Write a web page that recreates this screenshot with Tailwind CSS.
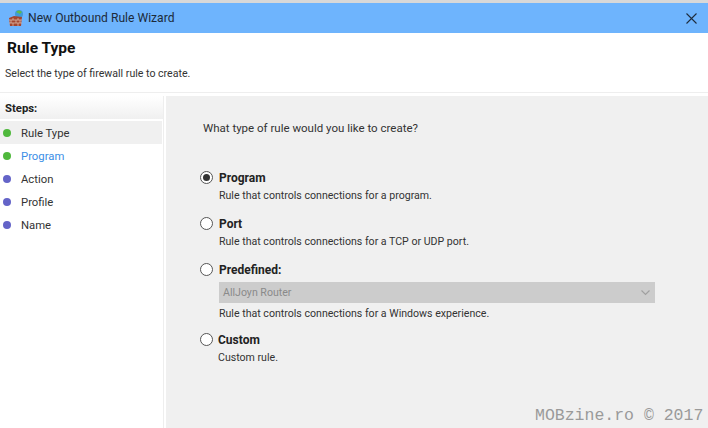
<!DOCTYPE html>
<html lang="en">
<head>
<meta charset="UTF-8">
<title>New Outbound Rule Wizard</title>
<script src="https://cdn.jsdelivr.net/npm/@tailwindcss/browser@4"></script>
</head>
<body class="relative w-[708px] h-[428px] overflow-hidden bg-white font-['Roboto',sans-serif] text-[10.6px] text-[#333]">
  <div class="h-[3px] bg-[#d8d8d8]"></div>

  <!-- title bar -->
  <div class="h-[30px] bg-[#6eb4fd] flex items-center pl-[8px] pr-[11px]">
    <svg class="w-[16px] h-[18px]" viewBox="0 0 16 18">
      <circle cx="11" cy="5" r="4" fill="#3f9bd8"/>
      <path d="M8 3q3-3 6 0l-2 2z" fill="#62b84a"/>
      <path d="M1 9l5-2 8 1-1 9H2z" fill="#a4452f"/>
      <path d="M1 11h13M1 14h13M5 9v2M10 9v2M3 11v3M8 11v3M12 11v3M5 14v3M10 14v3" stroke="#dcb7a5" stroke-width="0.8"/>
    </svg>
    <span class="ml-[4px] text-[12.1px] text-[#1c2a3a]">New Outbound Rule Wizard</span>
    <svg class="ml-auto w-[11px] h-[11px]" viewBox="0 0 11 11"><path d="M0.5 0.5l10 10M10.5 0.5l-10 10" stroke="#1f2d3d" stroke-width="1.1"/></svg>
  </div>

  <!-- header -->
  <div class="h-[60px] border-b border-[#eeeeee] pl-[7px] pt-[5px]">
    <div class="text-[15.5px] font-bold leading-[20px] text-[#111]">Rule Type</div>
    <div class="-ml-[2px] mt-[8px] leading-[16px]">Select the type of firewall rule to create.</div>
  </div>

  <div class="flex h-[335px] pt-[3px]">
    <!-- steps -->
    <div class="w-[164px] shrink-0 border-r border-[#eeeeee] text-[11.3px]">
      <div class="h-[23px] flex items-center pl-[5px] pt-[3px] font-bold text-[#222] bg-gradient-to-b from-white to-[#f0f0f0]">Steps:</div>
      <div class="mt-[2px] flex flex-col">
        <div class="h-[23px] w-[162px] bg-[#f0f0f0] flex items-center pl-[3px]"><span class="w-[8px] h-[8px] rounded-full bg-[#4fb83c]"></span><span class="ml-[10px] pt-[3px]">Rule Type</span></div>
        <div class="h-[23px] flex items-center pl-[3px]"><span class="w-[8px] h-[8px] rounded-full bg-[#4fb83c]"></span><span class="ml-[10px] pt-[3px] text-[#3a8ee6]">Program</span></div>
        <div class="h-[23px] flex items-center pl-[3px]"><span class="w-[8px] h-[8px] rounded-full bg-[#6464c8]"></span><span class="ml-[10px] pt-[3px]">Action</span></div>
        <div class="h-[23px] flex items-center pl-[3px]"><span class="w-[8px] h-[8px] rounded-full bg-[#6464c8]"></span><span class="ml-[10px] pt-[3px]">Profile</span></div>
        <div class="h-[23px] flex items-center pl-[3px]"><span class="w-[8px] h-[8px] rounded-full bg-[#6464c8]"></span><span class="ml-[10px] pt-[3px]">Name</span></div>
      </div>
    </div>

    <!-- content -->
    <div class="ml-[2px] flex-1 bg-[#f0f0f0] pl-[37px]">
      <div class="pt-[23px] leading-[18px] text-[11.5px]">What type of rule would you like to create?</div>

      <div class="mt-[31px] -ml-[3px] flex flex-col">
        <div class="h-[46px]">
          <div class="flex items-center h-[18px]">
            <span class="w-[13px] h-[13px] rounded-full border border-[#555] bg-white flex items-center justify-center"><span class="w-[7px] h-[7px] rounded-full bg-[#333]"></span></span>
            <span class="ml-[6px] pt-[2px] font-bold text-[12px] text-[#222]">Program</span>
          </div>
          <div class="ml-[19px] leading-[20px]">Rule that controls connections for a program.</div>
        </div>
        <div class="h-[46px]">
          <div class="flex items-center h-[18px]">
            <span class="w-[13px] h-[13px] rounded-full border border-[#555] bg-white"></span>
            <span class="ml-[6px] pt-[2px] font-bold text-[12px] text-[#222]">Port</span>
          </div>
          <div class="ml-[19px] leading-[20px]">Rule that controls connections for a TCP or UDP port.</div>
        </div>
        <div class="h-[70px]">
          <div class="flex items-center h-[18px]">
            <span class="w-[13px] h-[13px] rounded-full border border-[#555] bg-white"></span>
            <span class="ml-[6px] pt-[2px] font-bold text-[12px] text-[#222]">Predefined:</span>
          </div>
          <div class="ml-[19px] w-[436px] h-[21px] mt-[4px] bg-[#cccccc] flex items-center justify-between pl-[4px] pr-[5px] text-[#8a8a8a]">
            <span>AllJoyn Router</span>
            <svg class="w-[9px] h-[6px]" viewBox="0 0 9 6"><path d="M0.5 0.5l4 4 4-4" fill="none" stroke="#a0a0a0" stroke-width="1.1"/></svg>
          </div>
          <div class="ml-[19px] leading-[20px] mt-[1px]">Rule that controls connections for a Windows experience.</div>
        </div>
        <div>
          <div class="flex items-center h-[18px]">
            <span class="w-[13px] h-[13px] rounded-full border border-[#555] bg-white"></span>
            <span class="ml-[5px] pt-[2px] font-bold text-[12px] text-[#222]">Custom</span>
          </div>
          <div class="ml-[18px] leading-[20px]">Custom rule.</div>
        </div>
      </div>
    </div>
  </div>

  <div class="absolute left-[535px] top-[407px] font-['Liberation_Mono',monospace] text-[16.5px] leading-[18px] text-[#9a9a9a] whitespace-nowrap">MOBzine.ro © 2017</div>
</body>
</html>
